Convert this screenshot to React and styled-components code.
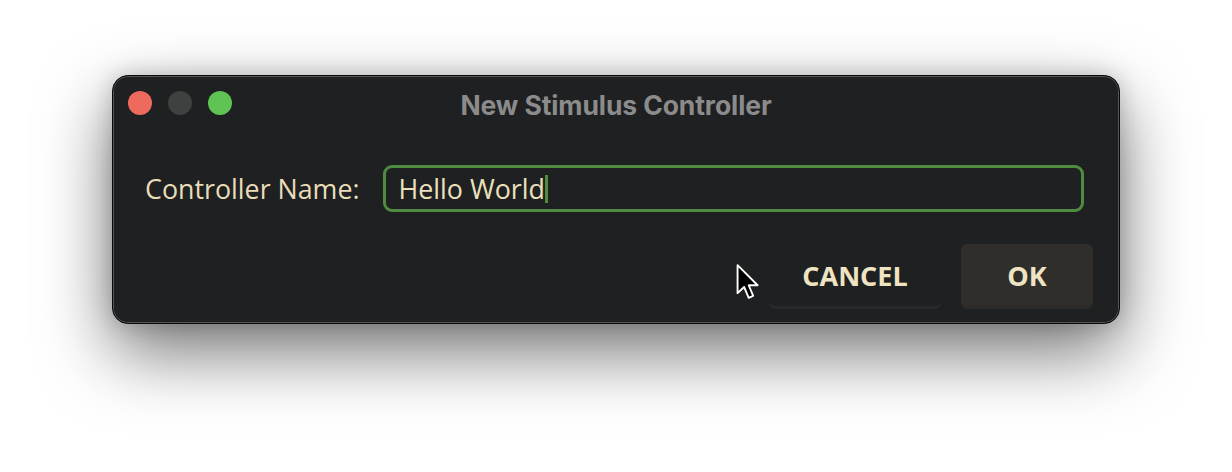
import React from "react";
import styled, { createGlobalStyle } from "styled-components";

const GlobalStyle = createGlobalStyle`
  html, body {
    margin: 0;
    padding: 0;
    background: #ffffff;
  }
`;

const Stage = styled.div`
  width: 1232px;
  height: 472px;
  box-sizing: border-box;
  padding: 75px 0 0 112px;
  background: #ffffff;
  overflow: hidden;
`;

const Window = styled.div`
  position: relative;
  width: 1008px;
  height: 249px;
  box-sizing: border-box;
  background: #1f2022;
  border: 1px solid #0a0a0a;
  border-radius: 16px;
  box-shadow: inset 0 0 0 1px rgba(255, 255, 255, 0.24),
    0 28px 70px rgba(0, 0, 0, 0.55), 0 0 22px rgba(0, 0, 0, 0.18);
  display: flex;
  flex-direction: column;
`;

const TitleBar = styled.div`
  position: relative;
  height: 55px;
  display: flex;
  align-items: center;
  justify-content: center;
  padding-top: 1px;
`;

const Lights = styled.div`
  position: absolute;
  left: 15px;
  top: 15px;
  display: flex;
  gap: 16px;
`;

const Light = styled.span`
  width: 24px;
  height: 24px;
  border-radius: 50%;
  background: ${(props) => props.color};
`;

const Title = styled.h1`
  margin: 0;
  font-family: "Inter", "Liberation Sans", sans-serif;
  font-weight: 700;
  font-size: 26.5px;
  color: #8b8b8b;
  letter-spacing: -0.1px;
`;

const Body = styled.div`
  flex: 1;
  display: flex;
  flex-direction: column;
  padding: 33px 26px 15px 32px;
`;

const FieldRow = styled.div`
  display: flex;
  align-items: center;
  gap: 23px;
  padding-right: 9px;
`;

const Label = styled.label`
  font-family: "Open Sans", "Noto Sans", sans-serif;
  font-size: 26.8px;
  color: #e9ddb8;
  white-space: nowrap;
`;

const TextBox = styled.div`
  flex: 1;
  height: 47px;
  box-sizing: border-box;
  border: 3px solid #4f8c40;
  border-radius: 9px;
  padding: 0 13px;
  display: flex;
  align-items: center;
  font-family: "Open Sans", "Noto Sans", sans-serif;
  font-size: 26.8px;
  color: #ece0bc;
`;

const Caret = styled.span`
  width: 3px;
  height: 28px;
  background: #4f8c40;
`;

const ButtonRow = styled.div`
  margin-top: 32px;
  display: flex;
  justify-content: flex-end;
  gap: 20px;
`;

const Button = styled.button`
  width: ${(props) => props.width}px;
  height: 62px;
  border: none;
  border-radius: 6px;
  background: ${(props) => (props.primary ? "#302e2b" : "#1f2022")};
  box-shadow: 0 3px 0 ${(props) => (props.primary ? "#2b2a28" : "#28292b")};
  font-family: "Open Sans", "Noto Sans", sans-serif;
  font-weight: 700;
  font-size: 27px;
  color: #efe4c1;
  padding: 0;
  cursor: default;
`;

const Pointer = styled.svg`
  position: absolute;
  left: 622px;
  top: 187px;
`;

export default function App() {
  return (
    <>
      <GlobalStyle />
      <Stage>
        <Window>
          <TitleBar>
            <Lights>
              <Light color="#ee6a5e" />
              <Light color="#3f4140" />
              <Light color="#5fc453" />
            </Lights>
            <Title>New Stimulus Controller</Title>
          </TitleBar>
          <Body>
            <FieldRow>
              <Label>Controller Name:</Label>
              <TextBox>
                Hello World
                <Caret />
              </TextBox>
            </FieldRow>
            <ButtonRow>
              <Button width={172}>CANCEL</Button>
              <Button width={132} primary>
                OK
              </Button>
            </ButtonRow>
          </Body>
          <Pointer width="24" height="38" viewBox="0 0 14 22">
            <path
              d="M1.5 1.2 L1.5 17.5 L5.3 13.9 L8 20.2 L10.6 19.1 L8 12.9 L13.2 12.9 Z"
              fill="#000"
              stroke="#fff"
              strokeWidth="1.1"
              strokeLinejoin="round"
            />
          </Pointer>
        </Window>
      </Stage>
    </>
  );
}
